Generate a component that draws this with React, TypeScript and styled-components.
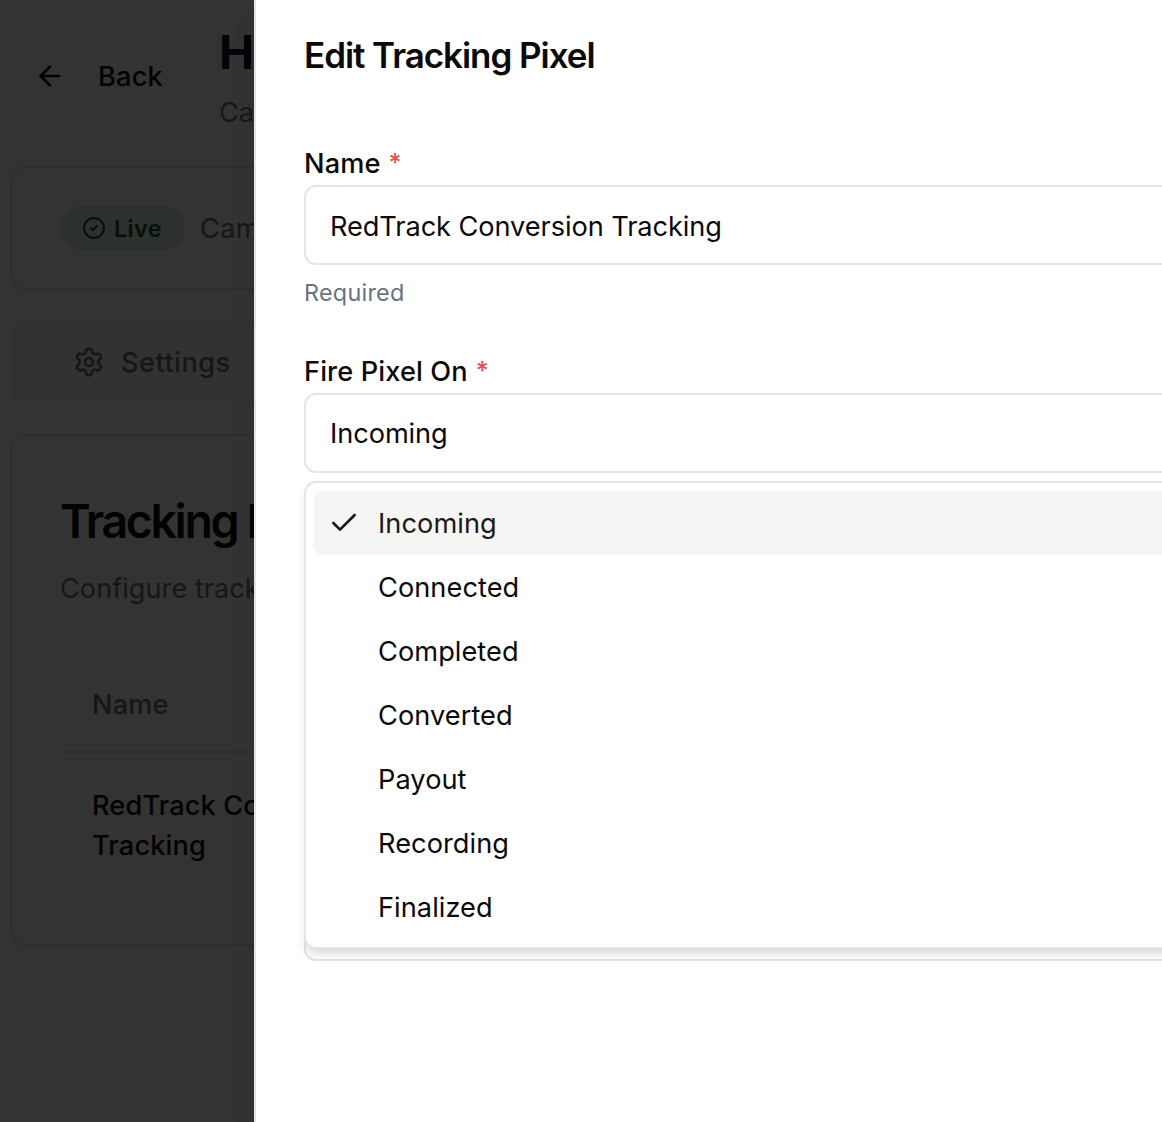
import React from 'react';
import styled, { createGlobalStyle } from 'styled-components';
import { ArrowLeft, Check, CircleCheck, Settings } from 'lucide-react';

const GlobalStyle = createGlobalStyle`
  *, *::before, *::after { box-sizing: border-box; }
  html, body { margin: 0; height: 100%; overflow: hidden; background: #fff; }
  body {
    font-family: Inter, "Liberation Sans", sans-serif;
    font-size: 27.2px;
    line-height: 40px;
    color: #0c0a09;
    -webkit-font-smoothing: antialiased;
  }
  h1, h2, p { margin: 0; }
`;

const Screen = styled.div`
  position: relative;
  width: 100vw;
  height: 100vh;
  overflow: hidden;
`;

const Page = styled.main`
  display: flex;
  flex-direction: column;
  width: 1800px;
  padding: 20px 10px 0;
`;

const Header = styled.header`
  display: flex;
  height: 146px;
`;

const BackButton = styled.button`
  display: flex;
  align-items: center;
  gap: 32px;
  width: 186px;
  height: 112px;
  margin-right: 23px;
  margin-left: 0;
  padding: 0 0 0 24px;
  border: 0;
  background: none;
  color: #0c0a09;
  font: inherit;
  font-weight: 500;
  letter-spacing: 0.2px;
`;

const HeaderText = styled.div`
  display: flex;
  flex-direction: column;
`;

const PageTitle = styled.h1`
  color: #0f172a;
  font-size: 47px;
  font-weight: 700;
  line-height: 64px;
`;

const PageSubtitle = styled.p`
  margin-top: 9px;
  color: #6b7280;
`;

const Card = styled.section<{ $height: number }>`
  display: flex;
  flex-direction: column;
  height: ${(p) => p.$height}px;
  border: 2px solid #e5e5e5;
  border-radius: 16px;
  background: #fff;
  box-shadow: 0 2px 4px rgba(0, 0, 0, 0.05);
`;

const StatusRow = styled.div`
  display: flex;
  align-items: center;
  gap: 16px;
  height: 100%;
  padding: 0 48px;
  color: #71717a;
  letter-spacing: 0.3px;
`;

const LiveBadge = styled.span`
  display: inline-flex;
  align-items: center;
  gap: 8px;
  width: 124px;
  height: 44px;
  padding: 0 20px;
  border: 2px solid #cdeed3;
  border-radius: 22px;
  background: #def3e0;
  color: #14532d;
  font-size: 23.4px;
  font-weight: 600;
  line-height: 32px;
  letter-spacing: 0.4px;
`;

const TextDrop = styled.span`
  padding-top: 2px;
`;

const TabBar = styled.nav`
  display: flex;
  align-items: center;
  height: 80px;
  margin: 32px 0;
  padding-left: 63px;
  border-radius: 12px;
  background: #f9f9f8;
`;

const Tab = styled.span`
  display: flex;
  align-items: center;
  gap: 16px;
  color: #78716c;
  font-weight: 500;
  letter-spacing: 0.45px;
`;

const CardHeader = styled.div`
  display: flex;
  flex-direction: column;
  gap: 12px;
  padding: 61px 48px 0;
`;

const CardTitle = styled.h2`
  font-size: 46.6px;
  font-weight: 600;
  line-height: 48px;
  letter-spacing: -2.4px;
  white-space: nowrap;
`;

const CardDescription = styled.p`
  margin-top: 12px;
  color: #78716c;
`;

const Table = styled.div`
  display: flex;
  flex-direction: column;
  margin: 48px 48px 0;
`;

const TableHead = styled.div`
  display: flex;
  align-items: center;
  height: 96px;
  padding: 2px 32px 0;
  border-bottom: 2px solid #e5e5e5;
  color: #78716c;
  font-weight: 500;
  letter-spacing: 0.15px;
`;

const TableCell = styled.div`
  width: 400px;
  padding: 33px 32px;
  font-weight: 500;
  letter-spacing: 0.12px;
`;

const Overlay = styled.div`
  position: absolute;
  inset: 0;
  background: rgba(0, 0, 0, 0.8);
`;

const Sheet = styled.aside`
  position: absolute;
  top: 0;
  bottom: 0;
  left: 254px;
  width: 1200px;
  display: flex;
  flex-direction: column;
  padding: 35px 48px;
  border-left: 2px solid #e5e5e5;
  background: #fff;
  box-shadow: 0 20px 30px -6px rgba(0, 0, 0, 0.1), 0 8px 12px -8px rgba(0, 0, 0, 0.1);
`;

const SheetTitle = styled.h2`
  margin-bottom: 69px;
  font-size: 35px;
  font-weight: 600;
  line-height: 40px;
  letter-spacing: -1.05px;
`;

const Field = styled.div`
  position: relative;
  display: flex;
  flex-direction: column;
`;

const Label = styled.label`
  display: flex;
  gap: 8px;
  height: 41px;
  font-weight: 500;
  letter-spacing: 0.12px;
`;

const Asterisk = styled.span`
  color: #e0504c;
  font-size: 25px;
  line-height: 38px;
`;

const Control = styled.div<{ $drop?: number }>`
  display: flex;
  align-items: center;
  height: 80px;
  padding: ${(p) => p.$drop ?? 0}px 24px 0;
  border: 2px solid #e5e5e5;
  border-radius: 12px;
  letter-spacing: -0.08px;
`;

const Hint = styled.p`
  height: 40px;
  margin: 12px 0 35px;
  color: #6b7280;
  font-size: 23.4px;
  line-height: 32px;
  letter-spacing: 0.25px;
`;

const HiddenField = styled.div`
  height: 160px;
  margin-top: 328px;
  border: 2px solid #e5e5e5;
  border-radius: 12px;
`;

const Menu = styled.ul`
  position: absolute;
  top: 129px;
  left: 0;
  right: 0;
  display: flex;
  flex-direction: column;
  margin: 0;
  padding: 8px;
  border: 2px solid #e5e5e5;
  border-radius: 12px;
  background: #fff;
  list-style: none;
  box-shadow: 0 8px 12px -2px rgba(0, 0, 0, 0.1), 0 4px 8px -4px rgba(0, 0, 0, 0.1);
`;

const Option = styled.li<{ $selected: boolean }>`
  display: flex;
  align-items: center;
  height: 64px;
  padding-left: ${(p) => (p.$selected ? 14 : 64)}px;
  gap: 18px;
  border-radius: 8px;
  background: ${(p) => (p.$selected ? '#f5f5f4' : 'transparent')};
  color: ${(p) => (p.$selected ? '#1c1917' : '#0c0a09')};
`;

const OptionText = styled.span`
  padding-top: 1px;
  letter-spacing: 0.05px;
`;

const events = ['Incoming', 'Connected', 'Completed', 'Converted', 'Payout', 'Recording', 'Finalized'];

export default function App() {
  const selected = 'Incoming';
  return (
    <Screen>
      <GlobalStyle />
      <Page>
        <Header>
          <BackButton>
            <ArrowLeft size={32} />
            <TextDrop>Back</TextDrop>
          </BackButton>
          <HeaderText>
            <PageTitle>H</PageTitle>
            <PageSubtitle>Ca</PageSubtitle>
          </HeaderText>
        </Header>
        <Card $height={124}>
          <StatusRow>
            <LiveBadge>
              <CircleCheck size={24} />
              <TextDrop>Live</TextDrop>
            </LiveBadge>
            <TextDrop>Cam</TextDrop>
          </StatusRow>
        </Card>
        <TabBar>
          <Tab>
            <Settings size={32} />
            <TextDrop>Settings</TextDrop>
          </Tab>
        </TabBar>
        <Card $height={512}>
          <CardHeader>
            <CardTitle>Tracking P</CardTitle>
            <CardDescription>Configure track</CardDescription>
          </CardHeader>
          <Table>
            <TableHead>Name</TableHead>
            <TableCell>
              RedTrack Conversion
              <br />
              Tracking
            </TableCell>
          </Table>
        </Card>
      </Page>
      <Overlay />
      <Sheet>
        <SheetTitle>Edit Tracking Pixel</SheetTitle>
        <Field>
          <Label>
            Name <Asterisk>*</Asterisk>
          </Label>
          <Control $drop={3}>RedTrack Conversion Tracking</Control>
          <Hint>Required</Hint>
        </Field>
        <Field>
          <Label>
            Fire Pixel On <Asterisk>*</Asterisk>
          </Label>
          <Control $drop={1}>{selected}</Control>
          <Menu>
            {events.map((name) => (
              <Option key={name} $selected={name === selected}>
                {name === selected && <Check size={32} />}
                <OptionText>{name}</OptionText>
              </Option>
            ))}
          </Menu>
        </Field>
        <HiddenField />
      </Sheet>
    </Screen>
  );
}
